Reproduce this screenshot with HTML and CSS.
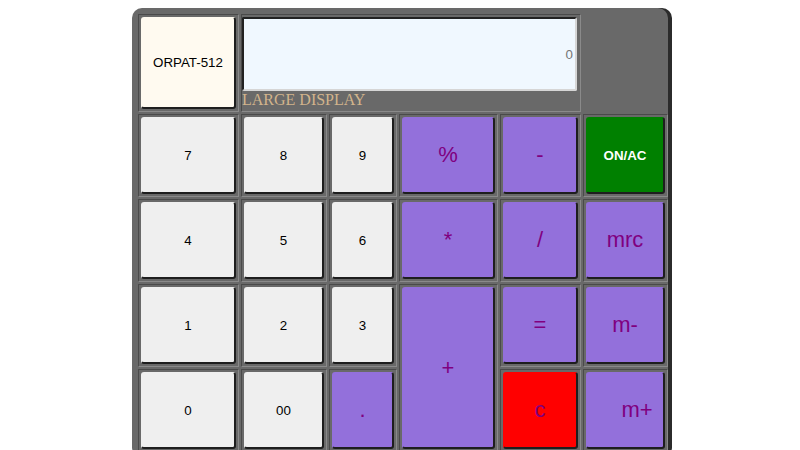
FILE: index.html
```html
<!DOCTYPE html>
<html lang="en">
<head>
<meta charset="utf-8">
<title>ORPAT-512 Calculator</title>
<link rel="stylesheet" href="styles.css">
</head>
<body>
<div class="calc">
  <div class="keys">
    <div class="cell first"><button class="key brand">ORPAT-512</button></div>
    <div class="cell display-cell">
      <input class="screen" type="text" value="0" readonly>
      <span class="label">LARGE DISPLAY</span>
    </div>

    <div class="cell first"><button class="key">7</button></div>
    <div class="cell"><button class="key">8</button></div>
    <div class="cell"><button class="key">9</button></div>
    <div class="cell"><button class="key op">%</button></div>
    <div class="cell"><button class="key op">-</button></div>
    <div class="cell"><button class="key on">ON/AC</button></div>

    <div class="cell first"><button class="key">4</button></div>
    <div class="cell"><button class="key">5</button></div>
    <div class="cell"><button class="key">6</button></div>
    <div class="cell"><button class="key op">*</button></div>
    <div class="cell"><button class="key op">/</button></div>
    <div class="cell"><button class="key op">mrc</button></div>

    <div class="cell first"><button class="key">1</button></div>
    <div class="cell"><button class="key">2</button></div>
    <div class="cell"><button class="key">3</button></div>
    <div class="cell plus-cell"><button class="key op">+</button></div>
    <div class="cell"><button class="key op">=</button></div>
    <div class="cell"><button class="key op">m-</button></div>

    <div class="cell first"><button class="key">0</button></div>
    <div class="cell"><button class="key">00</button></div>
    <div class="cell"><button class="key op">.</button></div>
    <div class="cell"><button class="key op clear">c</button></div>
    <div class="cell"><button class="key op mplus">m+</button></div>
  </div>
</div>
</body>
</html>
```

FILE: styles.css
```css
html, body {
  margin: 0;
  background: #ffffff;
}

body {
  padding-top: 8px;
  font-family: "Liberation Sans", Arial, sans-serif;
}

.calc {
  width: 536px;
  margin: 0 auto;
  box-sizing: border-box;
  padding: 6px 0 6px 6px;
  background: #696969;
  border-radius: 10px;
  box-shadow: 4px 0 0 #2b2b2b;
}

.keys {
  display: grid;
  grid-template-columns: 101px 86px 68px 99px 81px 85px;
  grid-template-rows: 98px repeat(4, 83px);
  gap: 2px;
}

.cell {
  box-sizing: border-box;
  border: 1px solid;
  border-color: #4a4a4a #8a8a8a #8a8a8a #4a4a4a;
  padding: 2px;
  display: flex;
}

.first {
  grid-column-start: 1;
}

.display-cell {
  grid-column: 2 / 6;
  grid-row: 1;
  flex-direction: column;
  padding: 2px 3px 2px 0;
}

.plus-cell {
  grid-row: 4 / 6;
  grid-column: 4;
}

.screen {
  box-sizing: border-box;
  width: 100%;
  height: 74px;
  margin: 0;
  padding: 1px 2px;
  border: 2px solid;
  border-color: #222222 #d6d6d6 #d6d6d6 #222222;
  border-radius: 2px;
  background: #f0f8ff;
  color: #767676;
  font-family: "Liberation Sans", Arial, sans-serif;
  font-size: 13.33px;
  text-align: right;
  outline: none;
}

.label {
  display: block;
  height: 18px;
  line-height: 18px;
  font-family: "Liberation Serif", "Times New Roman", serif;
  font-size: 16px;
  color: #d2b48c;
  white-space: nowrap;
}

.key {
  flex: 1;
  box-sizing: border-box;
  margin: 0;
  padding: 0;
  border-style: solid;
  border-width: 1px 2px 2px 1px;
  border-color: transparent #1e1e1e #1e1e1e transparent;
  border-radius: 3px;
  background: #efefef;
  color: #000000;
  font-family: "Liberation Sans", Arial, sans-serif;
  font-size: 13.33px;
  cursor: pointer;
}

.brand {
  background: #fffaf0;
}

.op {
  background: #9370db;
  color: #800080;
  font-size: 22px;
}

.on {
  background: #008000;
  color: #ffffff;
  font-weight: bold;
}

.clear {
  background: #ff0000;
}

.mplus {
  padding-left: 24px;
}
```
